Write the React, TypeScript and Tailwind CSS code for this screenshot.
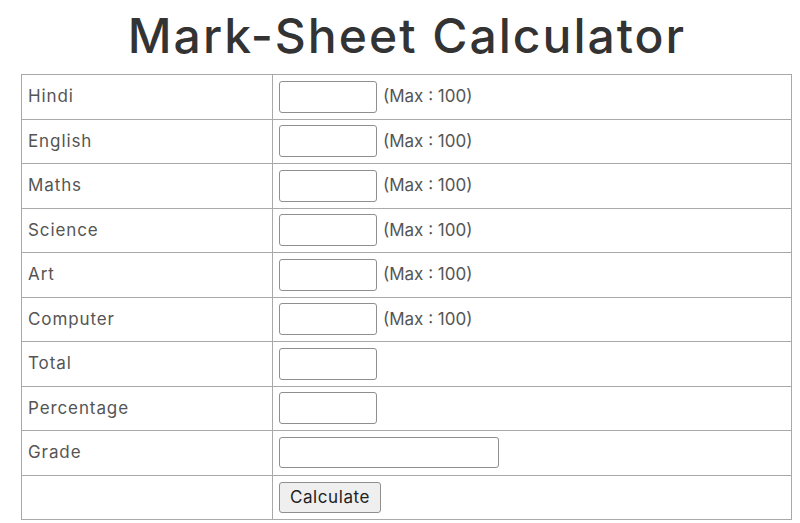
import React from "react";

const subjects = ["Hindi", "English", "Maths", "Science", "Art", "Computer"];

function Input({ wide }: { wide?: boolean }) {
  return (
    <input
      type="text"
      className={
        wide
          ? "w-[220px] h-[31px] border border-[#8f8f8f] rounded-[3px] bg-white outline-none"
          : "w-[98px] h-[32px] border border-[#8f8f8f] rounded-[3px] bg-white outline-none"
      }
    />
  );
}

export default function App() {
  const font = { fontFamily: "Inter, 'Noto Sans', sans-serif" };
  return (
    <div className="w-[800px] h-[523px] bg-white overflow-hidden" style={font}>
      <h1 className="text-center text-[48px] leading-none text-[#333] font-medium pt-[12px] pl-[14px] h-[74px] tracking-[2px]">
        Mark-Sheet Calculator
      </h1>
      <table className="ml-[21px] w-[771px] border-collapse border border-[#a9a9a9] text-[17px] text-[#555]">
        <tbody>
          {subjects.map((s) => (
            <tr key={s} className="h-[44.5px]">
              <td className="w-[251px] border border-[#a9a9a9] pl-[6px] align-middle tracking-[0.9px]">{s}</td>
              <td className="border border-[#a9a9a9] pl-[6px] align-middle">
                <div className="flex items-center gap-[6px]">
                  <Input />
                  <span className="text-[#555]">(Max : 100)</span>
                </div>
              </td>
            </tr>
          ))}
          {["Total", "Percentage"].map((s) => (
            <tr key={s} className="h-[44.5px]">
              <td className="border border-[#a9a9a9] pl-[6px] align-middle tracking-[0.9px]">{s}</td>
              <td className="border border-[#a9a9a9] pl-[6px] align-middle">
                <div className="flex items-center">
                  <Input />
                </div>
              </td>
            </tr>
          ))}
          <tr className="h-[44.5px]">
            <td className="border border-[#a9a9a9] pl-[6px] align-middle tracking-[0.9px]">Grade</td>
            <td className="border border-[#a9a9a9] pl-[6px] align-middle">
              <div className="flex items-center">
                <Input wide />
              </div>
            </td>
          </tr>
          <tr className="h-[44.5px]">
            <td className="border border-[#a9a9a9] pl-[6px]"></td>
            <td className="border border-[#a9a9a9] pl-[6px] align-middle">
              <div className="flex items-center">
                <button className="h-[31px] w-[102px] bg-[#efefef] border border-[#8f8f8f] rounded-[3px] text-[#222] text-[17px] tracking-[0.6px]">
                  Calculate
                </button>
              </div>
            </td>
          </tr>
        </tbody>
      </table>
    </div>
  );
}
